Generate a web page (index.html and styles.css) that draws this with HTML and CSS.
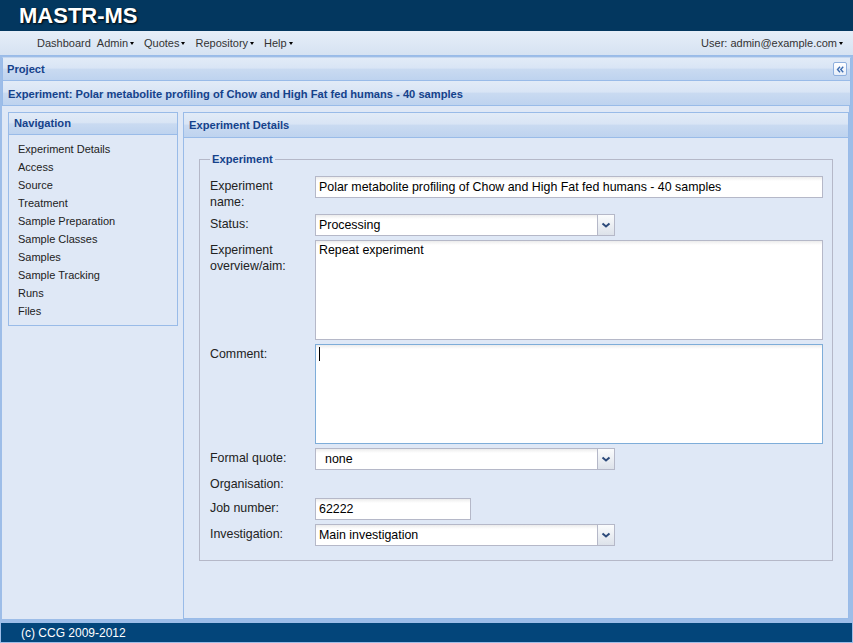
FILE: index.html
```html
<!DOCTYPE html>
<html lang="en">
<head>
<meta charset="utf-8">
<title>MASTR-MS</title>
<link rel="stylesheet" href="styles.css">
</head>
<body>
<div class="app">
  <header class="topbar"><span class="brand">MASTR-MS</span></header>
  <nav class="menubar">
    <div class="menu-left">
      <span class="menu-item">Dashboard</span>
      <span class="menu-item">Admin<i class="caret"></i></span>
      <span class="menu-item">Quotes<i class="caret"></i></span>
      <span class="menu-item">Repository<i class="caret"></i></span>
      <span class="menu-item">Help<i class="caret"></i></span>
    </div>
    <div class="menu-right">
      <span class="menu-item last">User: admin@example.com<i class="caret"></i></span>
    </div>
  </nav>
  <div class="viewport">
    <div class="hdr project-header">
      <span>Project</span>
      <span class="tool-collapse">
        <svg width="13" height="13" viewBox="0 0 13 13"><path d="M6.5 3.5 L3.8 6.5 L6.5 9.5 M10 3.5 L7.3 6.5 L10 9.5" fill="none" stroke="#3d6cb0" stroke-width="1.5"/></svg>
      </span>
    </div>
    <div class="hdr exp-header">Experiment: Polar metabolite profiling of Chow and High Fat fed humans - 40 samples</div>
    <div class="layout">
      <aside class="west">
        <div class="nav-panel">
          <div class="hdr nav-header">Navigation</div>
          <ul class="nav-list">
            <li>Experiment Details</li>
            <li>Access</li>
            <li>Source</li>
            <li>Treatment</li>
            <li>Sample Preparation</li>
            <li>Sample Classes</li>
            <li>Samples</li>
            <li>Sample Tracking</li>
            <li>Runs</li>
            <li>Files</li>
          </ul>
        </div>
      </aside>
      <section class="center">
        <div class="hdr center-header">Experiment Details</div>
        <div class="center-body">
          <fieldset class="fs">
            <legend>Experiment</legend>
            <div class="row">
              <label class="lbl">Experiment name:</label>
              <div class="field full">Polar metabolite profiling of Chow and High Fat fed humans - 40 samples</div>
            </div>
            <div class="row">
              <label class="lbl">Status:</label>
              <div class="field select"><span class="val">Processing</span><span class="trigger"><svg width="16" height="20" viewBox="0 0 16 20"><path d="M4.5 8.5 L8 11.5 L11.5 8.5" fill="none" stroke="#2c4a7a" stroke-width="2"/></svg></span></div>
            </div>
            <div class="row">
              <label class="lbl">Experiment overview/aim:</label>
              <div class="field area full">Repeat experiment</div>
            </div>
            <div class="row">
              <label class="lbl">Comment:</label>
              <div class="field area full focus"><span class="text-caret"></span></div>
            </div>
            <div class="row">
              <label class="lbl">Formal quote:</label>
              <div class="field select"><span class="val indent">none</span><span class="trigger"><svg width="16" height="20" viewBox="0 0 16 20"><path d="M4.5 8.5 L8 11.5 L11.5 8.5" fill="none" stroke="#2c4a7a" stroke-width="2"/></svg></span></div>
            </div>
            <div class="row">
              <label class="lbl lbl-only">Organisation:</label>
            </div>
            <div class="row">
              <label class="lbl">Job number:</label>
              <div class="field job">62222</div>
            </div>
            <div class="row">
              <label class="lbl">Investigation:</label>
              <div class="field select"><span class="val">Main investigation</span><span class="trigger"><svg width="16" height="20" viewBox="0 0 16 20"><path d="M4.5 8.5 L8 11.5 L11.5 8.5" fill="none" stroke="#2c4a7a" stroke-width="2"/></svg></span></div>
            </div>
          </fieldset>
        </div>
      </section>
    </div>
    <footer class="footer">(c) CCG 2009-2012</footer>
  </div>
</div>
</body>
</html>
```

FILE: styles.css
```css
* { box-sizing: border-box; }

html, body {
  margin: 0;
  padding: 0;
}

body {
  font-family: "Liberation Sans", Arial, sans-serif;
  width: 853px;
  height: 643px;
  overflow: hidden;
}

.app {
  display: flex;
  flex-direction: column;
  height: 643px;
}

/* top bar */
.topbar {
  flex: none;
  height: 31px;
  background: #03375f;
  padding-left: 19px;
}

.brand {
  color: #fff;
  font-weight: bold;
  font-size: 22px;
  line-height: 31px;
  text-shadow: 1px 1px 2px #000;
}

/* menu */
.menubar {
  flex: none;
  height: 25px;
  display: flex;
  justify-content: space-between;
  align-items: center;
  background: linear-gradient(#e6eef8, #d6e2f2);
  border-bottom: 1px solid #99bbe8;
  padding: 0 6px 0 37px;
  font-size: 11px;
  color: #333;
}

.menu-left,
.menu-right {
  display: flex;
  align-items: center;
}

.menu-item {
  display: flex;
  align-items: center;
  margin-right: 6px;
  white-space: nowrap;
}

.menu-item.last {
  margin-right: 0;
}

.caret {
  display: inline-block;
  width: 0;
  height: 0;
  border-left: 2.5px solid transparent;
  border-right: 2.5px solid transparent;
  border-top: 3px solid #000;
  margin: 1px 4px 0 2px;
}

/* viewport */
.viewport {
  flex: 1;
  min-height: 0;
  display: flex;
  flex-direction: column;
  background: #9dbde8;
  padding: 1px 2px 1px 2px;
}

.hdr {
  display: flex;
  align-items: center;
  background: linear-gradient(#e2ebf7 0%, #d9e5f5 45%, #c9daf1 52%, #bed3ef 100%);
  color: #15428b;
  font-weight: bold;
  font-size: 11.15px;
  white-space: nowrap;
}

.project-header {
  flex: none;
  height: 24px;
  border: 1px solid #99bbe8;
  border-top-color: #c6d8f0;
  padding-left: 4px;
}

.tool-collapse {
  margin-left: auto;
  margin-right: 3px;
  width: 14px;
  height: 14px;
  border: 1px solid #8fb0de;
  border-radius: 2px;
  background: linear-gradient(#ffffff, #e6eef9);
  display: flex;
  align-items: center;
  justify-content: center;
}

.exp-header {
  flex: none;
  height: 25px;
  border: 1px solid #99bbe8;
  border-top: 0;
  padding: 1px 0 0 5px;
}

/* layout */
.layout {
  flex: 1;
  min-height: 0;
  display: flex;
  align-items: stretch;
  background: #dfe8f6;
  margin-right: 2px;
  padding: 6px 0 0 6px;
}

.west {
  flex: none;
  width: 170px;
  margin-right: 5px;
}

.nav-panel {
  border: 1px solid #99bbe8;
  background: #dfe8f6;
}

.nav-header {
  height: 22px;
  border-bottom: 1px solid #99bbe8;
  padding: 0 0 1px 5px;
}

.nav-list {
  list-style: none;
  margin: 0;
  padding: 5px 0 5px 9px;
  font-size: 11px;
  line-height: 18px;
  color: #222;
}

.center {
  flex: 1;
  display: flex;
  flex-direction: column;
  border: 1px solid #99bbe8;
  background: #dfe8f6;
}

.center-header {
  flex: none;
  height: 25px;
  border-bottom: 1px solid #99bbe8;
  padding-left: 5px;
}

.center-body {
  flex: 1;
  padding: 14px 15px 15px 15px;
}

/* fieldset */
.fs {
  margin: 0;
  border: 1px solid #b5b8c8;
  padding: 10px 9px 10px 10px;
}

.fs legend {
  padding: 0 2px;
  font-size: 11.15px;
  font-weight: bold;
  color: #15428b;
  line-height: 14px;
}

.row {
  display: flex;
  align-items: flex-start;
  margin-bottom: 4px;
}

.lbl {
  flex: none;
  width: 105px;
  padding: 3px 10px 0 0;
  font-size: 12.4px;
  line-height: 15.5px;
  color: #222;
}

.lbl-only {
  padding-bottom: 1px;
}

.field {
  height: 22px;
  border: 1px solid #b5b8c8;
  background: linear-gradient(#ececec 0, #ffffff 4px);
  font-size: 12.4px;
  line-height: 20px;
  padding: 0 3px;
  color: #000;
  white-space: nowrap;
  overflow: hidden;
}

.field.full {
  flex: 1;
}

.field.area {
  height: 100px;
  line-height: 15px;
  padding: 2px 3px;
  white-space: normal;
}

.field.focus {
  border-color: #7eadd9;
}

.text-caret {
  display: inline-block;
  width: 1px;
  height: 14px;
  background: #000;
  vertical-align: top;
}

.field.select {
  width: 300px;
  display: flex;
  padding: 0;
}

.select .val {
  flex: 1;
  padding: 0 3px;
}

.select .val.indent {
  padding-left: 9px;
}

.trigger {
  flex: none;
  width: 17px;
  height: 20px;
  border-left: 1px solid #b5b8c8;
  background: linear-gradient(#fbfcfd, #dde2ea);
  display: flex;
  align-items: center;
  justify-content: center;
}

.field.job {
  width: 156px;
}

/* footer */
.footer {
  flex: none;
  height: 19px;
  margin: 4px -1px 0 -1px;
  background: #03457a;
  color: #fff;
  font-size: 12px;
  line-height: 20px;
  padding-left: 20px;
}
```
